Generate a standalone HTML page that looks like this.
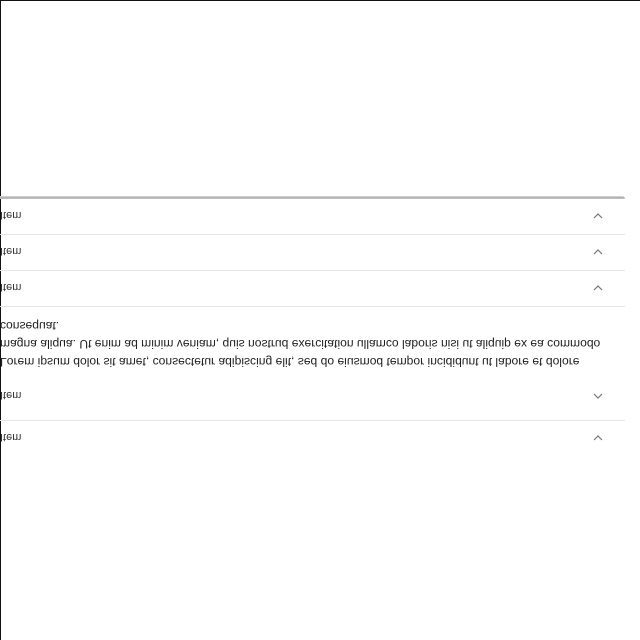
<!DOCTYPE html>
<html><head><style>
html,body{margin:0;padding:0;background:#fff;}
body{width:640px;height:640px;position:relative;overflow:hidden;font-family:"Liberation Sans",sans-serif;}
.frame{position:absolute;left:0;top:0;width:640px;height:640px;border-left:1px solid #111;border-top:1px solid #111;box-sizing:border-box;}
.card{position:absolute;left:-10px;top:196px;width:635px;height:3px;border-top-right-radius:4px;background:linear-gradient(#ddd,#aaa 60%,#ccc);}
.sep{position:absolute;left:0;width:625px;height:1px;background:#e6e6e6;}
.t{position:absolute;left:0px;font-size:11px;color:#333;transform:scaleY(-1);white-space:nowrap;line-height:12px;}
.p{font-size:12.1px;color:#222;left:0px;}
.c{position:absolute;left:592px;width:12px;height:8px;}
</style></head><body>
<div class="frame"></div>
<div class="card"></div>
<div class="sep" style="top:234px"></div>
<div class="sep" style="top:270px"></div>
<div class="sep" style="top:306px"></div>
<div class="sep" style="top:420px"></div>
<div class="t" style="top:209px">Item</div>
<div class="t" style="top:245px">Item</div>
<div class="t" style="top:281px">Item</div>
<div class="t p" style="top:320px">consequat.</div>
<div class="t p" style="top:338px">magna aliqua. Ut enim ad minim veniam, quis nostrud exercitation ullamco laboris nisi ut aliquip ex ea commodo</div>
<div class="t p" style="top:356px">Lorem ipsum dolor sit amet, consectetur adipiscing elit, sed do eiusmod tempor incididunt ut labore et dolore</div>
<div class="t" style="top:389px">Item</div>
<div class="t" style="top:431px">Item</div>
<svg class="c" style="top:212px" viewBox="0 0 12 8"><path d="M2 6 L6 2 L10 6" fill="none" stroke="#777" stroke-width="1.2"/></svg>
<svg class="c" style="top:248px" viewBox="0 0 12 8"><path d="M2 6 L6 2 L10 6" fill="none" stroke="#777" stroke-width="1.2"/></svg>
<svg class="c" style="top:284px" viewBox="0 0 12 8"><path d="M2 6 L6 2 L10 6" fill="none" stroke="#777" stroke-width="1.2"/></svg>
<svg class="c" style="top:392px" viewBox="0 0 12 8"><path d="M2 2 L6 6 L10 2" fill="none" stroke="#777" stroke-width="1.2"/></svg>
<svg class="c" style="top:434px" viewBox="0 0 12 8"><path d="M2 6 L6 2 L10 6" fill="none" stroke="#777" stroke-width="1.2"/></svg>
</body></html>
